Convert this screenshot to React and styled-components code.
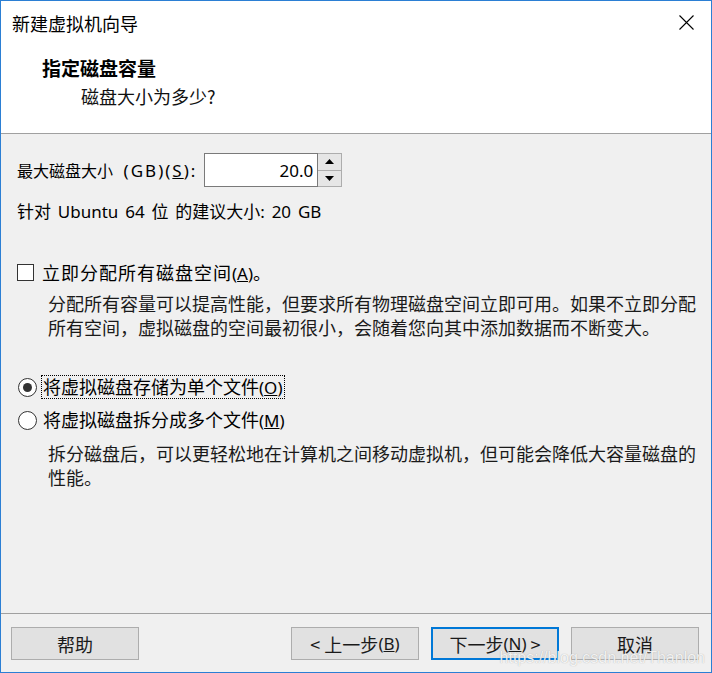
import styled, { createGlobalStyle } from "styled-components";

const GlobalStyle = createGlobalStyle`
  html, body {
    margin: 0;
    padding: 0;
    background: #ffffff;
  }
  * {
    box-sizing: border-box;
  }
`;

const cjk = `"Noto Sans CJK SC", "Noto Sans", sans-serif`;

const StyledWindow = styled.div`
  width: 712px;
  height: 673px;
  border: 1px solid #2b7fd4;
  background: #f0f0f0;
  display: flex;
  flex-direction: column;
  font-family: ${cjk};
  color: #000;
`;

const StyledTop = styled.div`
  height: 133px;
  background: #ffffff;
  border-bottom: 1px solid #a0a0a0;
`;

const StyledTitleBar = styled.div`
  height: 43px;
  display: flex;
  align-items: center;
  justify-content: space-between;
  padding: 0 17px 0 11px;
  font-size: 18px;
`;

const StyledClose = styled.svg`
  width: 15px;
  height: 15px;
`;

const StyledHeader = styled.div`
  padding: 11px 0 0 41px;
`;

const StyledHeading = styled.div`
  font-size: 19px;
  font-weight: 700;
  line-height: 25px;
`;

const StyledSubHeading = styled.div`
  font-size: 18px;
  line-height: 25px;
  margin-top: 4px;
  padding-left: 39px;
  color: #111;
`;

const StyledBody = styled.div`
  flex: 1;
  padding: 19px 16px 0 16px;
`;

const StyledSizeRow = styled.div`
  display: flex;
  align-items: center;
  height: 34px;
  gap: 7px;
  font-size: 16px;
  word-spacing: 7px;
  white-space: nowrap;
`;

const StyledLatin = styled.span`
  font-family: "Noto Sans", "Open Sans", sans-serif;
  font-size: 17px;
  letter-spacing: ${({ $ls }) => $ls || 0}px;
  word-spacing: 0;
`;

const StyledSpin = styled.div`
  display: flex;
  height: 34px;
`;

const StyledInput = styled.div`
  width: 114px;
  height: 34px;
  background: #fff;
  border: 1px solid #7a7a7a;
  display: flex;
  align-items: center;
  justify-content: flex-end;
  padding-right: 4px;
  font-family: "Noto Sans", sans-serif;
  font-size: 17px;
  word-spacing: 0;
`;

const StyledSpinButtons = styled.div`
  width: 24px;
  display: flex;
  flex-direction: column;
  border: 1px solid #adadad;
  border-left: none;
`;

const StyledSpinButton = styled.div`
  flex: 1;
  background: #e6e6e6;
  display: flex;
  align-items: center;
  justify-content: center;
  border-top: ${({ $bottom }) => ($bottom ? "1px solid #adadad" : "none")};
`;

const StyledArrow = styled.svg`
  width: 9px;
  height: 5px;
`;

const StyledRecommend = styled.div`
  margin-top: 12px;
  line-height: 24px;
  font-size: 17px;
  word-spacing: 3px;
  white-space: nowrap;
`;

const StyledOptionRow = styled.div`
  display: flex;
  align-items: center;
  height: ${({ $h }) => $h || 24}px;
  margin-top: ${({ $mt }) => $mt}px;
  font-size: 18px;
  white-space: nowrap;
`;

const StyledCheckbox = styled.span`
  width: 17px;
  height: 17px;
  border: 1px solid #333;
  background: #fff;
  margin-right: 8px;
`;

const StyledCheckLabel = styled.span`
  letter-spacing: 1px;
`;

const StyledRadio = styled.span`
  width: 19px;
  height: 19px;
  border-radius: 50%;
  border: 1px solid #333;
  background: #fff;
  display: flex;
  align-items: center;
  justify-content: center;
  margin-left: 1px;
  margin-right: 4px;

  &::after {
    content: "";
    width: 9px;
    height: 9px;
    border-radius: 50%;
    background: ${({ $checked }) => ($checked ? "#333" : "transparent")};
  }
`;

const StyledOptionLabel = styled.span`
  line-height: 20px;
  padding: 0 1px;
  border: 1px dotted ${({ $focus }) => ($focus ? "#000" : "transparent")};
`;

const StyledMnemonic = styled.span`
  font-family: "Noto Sans", sans-serif;
  font-size: 17px;
  letter-spacing: 0;
`;

const StyledDesc = styled.div`
  margin-top: ${({ $mt }) => $mt}px;
  padding-left: 31px;
  font-size: 18px;
  line-height: 24px;
  white-space: nowrap;
  color: #1a1a1a;
`;

const StyledFooter = styled.div`
  position: relative;
  height: 59px;
  border-top: 1px solid #a0a0a0;
  padding: 13px 12px 0 10px;
  display: flex;
  justify-content: space-between;
  align-items: flex-start;
`;

const StyledButtonGroup = styled.div`
  display: flex;
  gap: 12px;
`;

const StyledButton = styled.button`
  width: 128px;
  height: 33px;
  background: #e1e1e1;
  border: ${({ $primary }) => ($primary ? "2px solid #0078d7" : "1px solid #adadad")};
  font-family: ${cjk};
  font-size: 18px;
  color: #1a1a1a;
  padding: 0;
  display: flex;
  align-items: center;
  justify-content: center;
  white-space: pre;
`;

const StyledWatermark = styled.span`
  position: absolute;
  right: 6px;
  bottom: 5px;
  font-family: "Liberation Sans", Arial, sans-serif;
  font-size: 16px;
  color: rgba(255, 255, 255, 0.85);
  text-shadow: 0 0 1px rgba(120, 120, 120, 0.6);
  pointer-events: none;
`;

function Mn({ children }) {
  return (
    <StyledMnemonic>
      (<u>{children}</u>)
    </StyledMnemonic>
  );
}

export default function App() {
  return (
    <>
      <GlobalStyle />
      <StyledWindow>
        <StyledTop>
          <StyledTitleBar>
            <span>新建虚拟机向导</span>
            <StyledClose viewBox="0 0 15 15">
              <path d="M0.5 0.5 L14.5 14.5 M14.5 0.5 L0.5 14.5" stroke="#000" strokeWidth="1.1" />
            </StyledClose>
          </StyledTitleBar>
          <StyledHeader>
            <StyledHeading>指定磁盘容量</StyledHeading>
            <StyledSubHeading>磁盘大小为多少?</StyledSubHeading>
          </StyledHeader>
        </StyledTop>

        <StyledBody>
          <StyledSizeRow>
            <span>
              最大磁盘大小{" "}
              <StyledLatin $ls={2}>
                (GB)(<u>S</u>):
              </StyledLatin>
            </span>
            <StyledSpin>
              <StyledInput>20.0</StyledInput>
              <StyledSpinButtons>
                <StyledSpinButton>
                  <StyledArrow viewBox="0 0 9 5">
                    <path d="M0 5 L4.5 0 L9 5 Z" fill="#000" />
                  </StyledArrow>
                </StyledSpinButton>
                <StyledSpinButton $bottom>
                  <StyledArrow viewBox="0 0 9 5">
                    <path d="M0 0 L9 0 L4.5 5 Z" fill="#000" />
                  </StyledArrow>
                </StyledSpinButton>
              </StyledSpinButtons>
            </StyledSpin>
          </StyledSizeRow>

          <StyledRecommend>
            针对 <StyledLatin>Ubuntu</StyledLatin> <StyledLatin>64</StyledLatin> 位 的建议大小
            <StyledLatin>:</StyledLatin> <StyledLatin>20</StyledLatin> <StyledLatin>GB</StyledLatin>
          </StyledRecommend>

          <StyledOptionRow $mt={35} $h={26}>
            <StyledCheckbox />
            <StyledCheckLabel>
              立即分配所有磁盘空间<Mn>A</Mn>。
            </StyledCheckLabel>
          </StyledOptionRow>
          <StyledDesc $mt={6}>
            分配所有容量可以提高性能，但要求所有物理磁盘空间立即可用。如果不立即分配
            <br />
            所有空间，虚拟磁盘的空间最初很小，会随着您向其中添加数据而不断变大。
          </StyledDesc>

          <StyledOptionRow $mt={36}>
            <StyledRadio $checked />
            <StyledOptionLabel $focus>
              将虚拟磁盘存储为单个文件<Mn>O</Mn>
            </StyledOptionLabel>
          </StyledOptionRow>
          <StyledOptionRow $mt={9}>
            <StyledRadio />
            <StyledOptionLabel>
              将虚拟磁盘拆分成多个文件<Mn>M</Mn>
            </StyledOptionLabel>
          </StyledOptionRow>
          <StyledDesc $mt={9}>
            拆分磁盘后，可以更轻松地在计算机之间移动虚拟机，但可能会降低大容量磁盘的
            <br />
            性能。
          </StyledDesc>
        </StyledBody>

        <StyledFooter>
          <StyledButton>帮助</StyledButton>
          <StyledButtonGroup>
            <StyledButton>
              {"< 上一步"}
              <Mn>B</Mn>
            </StyledButton>
            <StyledButton $primary>
              下一步
              <Mn>N</Mn>
              {" >"}
            </StyledButton>
            <StyledButton>取消</StyledButton>
          </StyledButtonGroup>
          <StyledWatermark>https://blog.csdn.net/Thanlon</StyledWatermark>
        </StyledFooter>
      </StyledWindow>
    </>
  );
}
